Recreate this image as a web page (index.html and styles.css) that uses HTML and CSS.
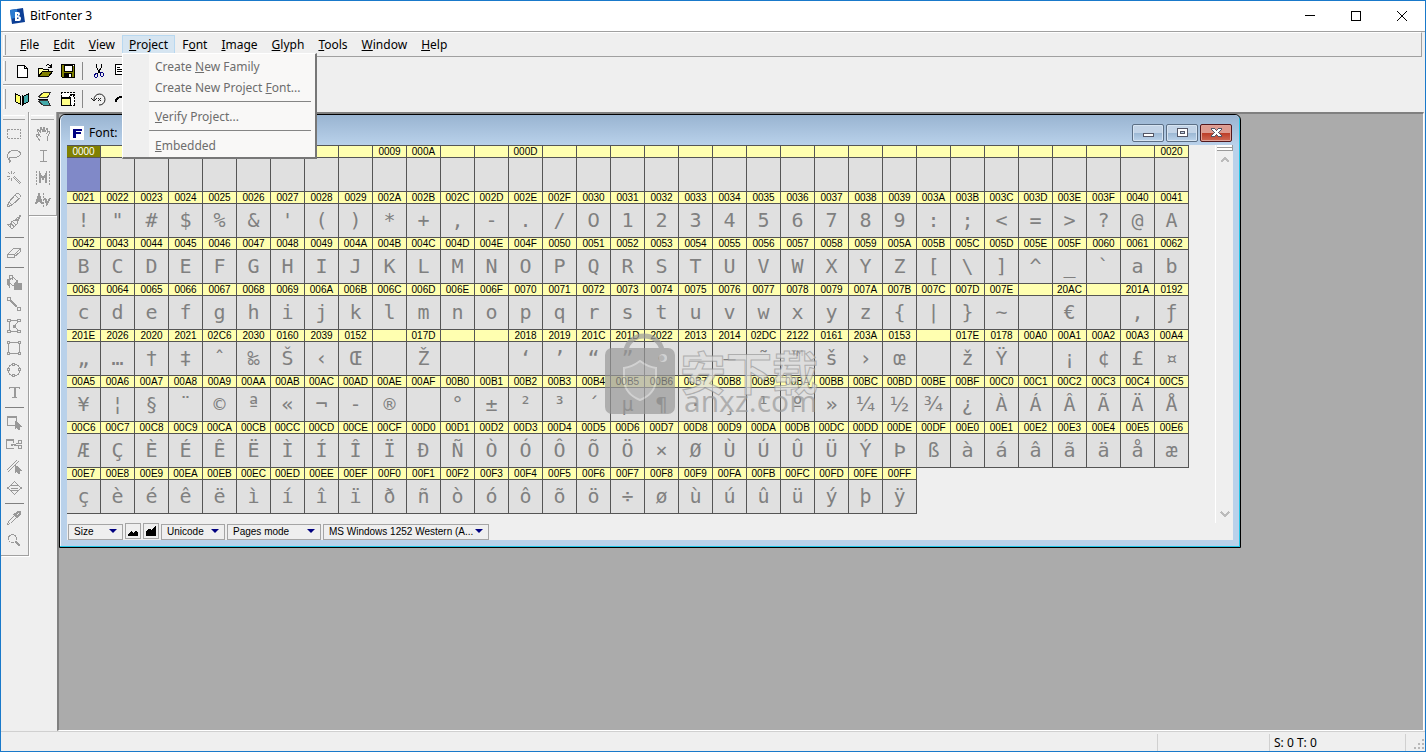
FILE: index.html
```html
<!DOCTYPE html>
<html lang="en">
<head>
<meta charset="utf-8">
<title>BitFonter 3</title>
<link rel="stylesheet" href="styles.css">
</head>
<body>
<div class="app">
  <header class="titlebar">
    <svg class="app-icon" viewBox="0 0 16 16"><path d="M1 2 14 0 16 14 3 16z" fill="#0c3f96"/><path d="M1 2 8 1 9 9 2 11z" fill="#2b7bd0"/><path d="M6 4h3q2 0 2 2t-2 2q3 0 3 2.500t-2 2.500H6zM8 6v1.500h1V6zm0 3.500V11h1.500V9.500z" fill="#fff" fill-rule="evenodd"/></svg>
    <h1 class="app-title">BitFonter 3</h1>
    <div class="caption-buttons">
      <button class="caption-button" aria-label="Minimize"><svg viewBox="0 0 12 12"><path d="M1 5.500h10"/></svg></button>
      <button class="caption-button" aria-label="Maximize"><svg viewBox="0 0 12 12"><path d="M1.500 1.500h9v9h-9z"/></svg></button>
      <button class="caption-button" aria-label="Close"><svg viewBox="0 0 12 12"><path d="M1 1l10 10M11 1L1 11" shape-rendering="auto"/></svg></button>
    </div>
  </header>

  <nav class="menubar">
    <span class="grip grip--menu"></span>
    <button class="menu-item"><u>F</u>ile</button>
    <button class="menu-item"><u>E</u>dit</button>
    <button class="menu-item"><u>V</u>iew</button>
    <div class="menu-holder">
      <button class="menu-item menu-item--open"><u>P</u>roject</button>
      <div class="dropdown">
        <button class="dropdown-item" disabled>Create <u>N</u>ew Family</button>
        <button class="dropdown-item" disabled>Create New Project <u>F</u>ont...</button>
        <hr class="dropdown-rule">
        <button class="dropdown-item" disabled><u>V</u>erify Project...</button>
        <hr class="dropdown-rule">
        <button class="dropdown-item" disabled><u>E</u>mbedded</button>
      </div>
    </div>
    <button class="menu-item">F<u>o</u>nt</button>
    <button class="menu-item"><u>I</u>mage</button>
    <button class="menu-item"><u>G</u>lyph</button>
    <button class="menu-item"><u>T</u>ools</button>
    <button class="menu-item"><u>W</u>indow</button>
    <button class="menu-item"><u>H</u>elp</button>
  </nav>

  <div class="toolbars">
    <div class="toolbar">
      <span class="grip"></span>
      <button class="tool" aria-label="New"><svg viewBox="0 0 16 16"><path d="M3.500 2.500h7l3 3v9h-10z" fill="#fff" stroke="#000"/><path d="M10.500 2.500v3h3" fill="none" stroke="#000"/></svg></button>
      <button class="tool" aria-label="Open"><svg viewBox="0 0 16 16"><path d="M1 5h4l1 1h5v3H5l-3 4H1z" fill="#ffffa0" stroke="#000"/><path d="M5.500 8.500h10l-4 5h-10z" fill="#808000" stroke="#000"/><path d="M9 3q3-3 5 1M14 1v3h-3" fill="none" stroke="#000"/></svg></button>
      <button class="tool" aria-label="Save"><svg viewBox="0 0 16 16"><path d="M1.500 1.500h13v13h-12l-1-1z" fill="#808000" stroke="#000"/><path d="M4 2h8v6H4z" fill="#fff" stroke="#000"/><path d="M4 10h8v4H4z" fill="#000"/><path d="M9 11h2v3H9zM13 2h1v1h-1z" fill="#fff"/></svg></button>
      <span class="tool-rule"></span>
      <button class="tool" aria-label="Cut"><svg viewBox="0 0 16 16"><path d="M5.500 1v3l4 7M10.500 1v3l-4 7" fill="none" stroke="#000"/><path d="M3.500 11.500l2-1 1 1v2l-1 1h-1l-1-1zM9.500 9.500h2l1 1v2l-1 1h-1l-1-1z" fill="none" stroke="#000080"/></svg></button>
      <button class="tool" aria-label="Copy"><svg viewBox="0 0 16 16"><path d="M1.500 1.500h6l3 3v7h-9zM3 4h3M3 6h5M3 8h5" fill="#fff" stroke="#000"/></svg></button>
    </div>
    <div class="toolbar">
      <span class="grip"></span>
      <button class="tool" aria-label="Flip horizontally"><svg viewBox="0 0 16 16"><path d="M1.500 2.500l5 3v8l-5-3z" fill="#ff6" stroke="#000"/><path d="M14.500 2.500l-5 3v8l5-3z" fill="#4aa" stroke="#000"/><path d="M8 4v11" stroke="#000"/></svg></button>
      <button class="tool" aria-label="Flip vertically"><svg viewBox="0 0 16 16"><path d="M6.500 1.500h7l-3 5h-7l-2-1z" fill="#ff6" stroke="#333"/><path d="M3.500 9.500h7l3 5h-7l-5-4z" fill="#4aa" stroke="#333"/><path d="M1 8h10" stroke="#000"/></svg></button>
      <button class="tool" aria-label="Resize"><svg viewBox="0 0 16 16"><path d="M1.500 5.500v-4h13v13h-4" fill="#fff" stroke="#000" stroke-dasharray="2 1"/><path d="M1.500 6.500h9v8h-9z" fill="#ff8" stroke="#000"/><path d="M1 7h10" stroke="#000" stroke-width="2"/><path d="M9 6l4-3M10 3h3v3" fill="none" stroke="#000"/></svg></button>
      <span class="tool-rule"></span>
      <button class="tool" aria-label="Rotate left"><svg viewBox="0 0 16 16"><path d="M3 9a5.500 5.500 0 1 1 5 5M0 7l3 3 3-3M7 7l3 3M10 7l-3 3" fill="none" stroke="#222" shape-rendering="auto"/></svg></button>
      <button class="tool" aria-label="Rotate right"><svg viewBox="0 0 16 16"><path d="M2 11q0-5 6-5" fill="none" stroke="#000" stroke-width="2"/></svg></button>
    </div>
  </div>

  <main class="workspace">
    <aside class="palette palette--draw">
      <button class="tool" aria-label="Select"><svg viewBox="0 0 16 16"><path d="M1.500 3.500h13v9h-13z" stroke-dasharray="2 1"/></svg></button>
      <button class="tool" aria-label="Lasso"><svg viewBox="0 0 16 16"><path d="M4 11C-1 10 1 3 8 2.500s9 5 3 6.500c-4 1-6-1-8 1s2 2 2 3-2 0-2 2"/></svg></button>
      <button class="tool" aria-label="Magic wand"><svg viewBox="0 0 16 16"><path d="M7 7l7 7M8 6l7 7M5.500 1v3M5.500 8v3M1 6h3M2 2l2 2M9 2L7 4M2 10l2-2"/></svg></button>
      <button class="tool" aria-label="Pencil"><svg viewBox="0 0 16 16"><path d="M1.500 14.500l1-4 8-9q1-1 3 1t1 3l-9 8zM3 10l3 3M9 3l4 4"/></svg></button>
      <button class="tool" aria-label="Brush"><svg viewBox="0 0 16 16"><path d="M14 1l1 1-4 5 1 2-6 6-5-5 3 1 0-2 2 1-1-2 4-2 2 1zM6 7l4 4M5 9l3 4M3 12l2 1M12 3l-3 4M13 5l-2 3"/></svg></button>
      <hr class="palette-rule">
      <button class="tool" aria-label="Eraser"><svg viewBox="0 0 16 16"><path d="M1.500 10.500l6-6h7l-6 6zM1.500 10.500v3h6l7-6v-3M8.500 10.500v3"/></svg></button>
      <hr class="palette-rule">
      <button class="tool" aria-label="Fill"><svg viewBox="0 0 16 16"><path d="M2 7l5-4 4 4-4 5zM3.500 5V1.500h3V6"/><path d="M1 6l2-1v7l-2-3zM9 9l2-2v2h4v6H8v-3z" fill="#999"/></svg></button>
      <button class="tool" aria-label="Line"><svg viewBox="0 0 16 16"><path d="M1.500 1.500h3v3h-3zM11.500 11.500h3v3h-3z"/><path d="M5 5l6 6" stroke-width="2"/></svg></button>
      <button class="tool" aria-label="Polygon"><svg viewBox="0 0 16 16"><path d="M3.500 4v8M4 13.500h8M4 2.500h8M12 4L8 8l4 4M1.500 1.500h3v2h-3zM11.500 1.500h3v2h-3zM1.500 12.500h3v2h-3zM11.500 12.500h3v2h-3zM7 7h2v2H7z"/></svg></button>
      <button class="tool" aria-label="Rectangle"><svg viewBox="0 0 16 16"><path d="M2.500 4v8M13.500 4v8M4 13.500h8M4 2.500h8M1.500 1.500h2v2h-2zM12.500 1.500h2v2h-2zM1.500 12.500h2v2h-2zM12.500 12.500h2v2h-2z"/></svg></button>
      <button class="tool" aria-label="Ellipse"><svg viewBox="0 0 16 16"><circle cx="8" cy="8" r="6"/><path fill="#efefef" d="M6.500 1.500h2v2h-2zM6.500 12.500h2v2h-2zM1.500 6.500h2v2h-2zM12.500 6.500h2v2h-2z"/></svg></button>
      <button class="tool" aria-label="Text"><svg viewBox="0 0 16 16"><path d="M3.500 5V3.500h10V5M6 13.500h5"/><path d="M8.500 3v11" stroke-width="2"/></svg></button>
      <hr class="palette-rule">
      <button class="tool" aria-label="Pick object"><svg viewBox="0 0 16 16"><path d="M1.500 2.500h9v9h-9zM1 3.500h10"/><path d="M9 7v8l2-2 2 3 1-1-1-3h2z" fill="#999"/></svg></button>
      <button class="tool" aria-label="Cut object"><svg viewBox="0 0 16 16"><path d="M8 12.500H.500v-9h7V7M0 4.500h8M5 8l7 2M5 10l7-3M12 4.500h3v3h-3zM12 9.500h3v3h-3z"/></svg></button>
      <button class="tool" aria-label="Pick line"><svg viewBox="0 0 16 16"><path d="M1 12L11 2M2 14L13 3"/><path d="M9 7v8l2-2 2 3 1-1-1-3h2z" fill="#999"/></svg></button>
      <button class="tool" aria-label="Move"><svg viewBox="0 0 16 16"><path d="M4.500 5.500l4-4 4 4zM4.500 10.500l4 4 4-4zM5 8h7M4 6L1.500 8 4 10M13 6l2.500 2L13 10"/></svg></button>
      <hr class="palette-rule">
      <button class="tool" aria-label="Eyedropper"><svg viewBox="0 0 16 16"><path d="M1.500 14.500l1-3 6-6 2 2-6 6z"/><path d="M8 4l4 4M9 5l3-3 2 0 0 2-3 3z" stroke-width="2"/></svg></button>
      <button class="tool" aria-label="Zoom"><svg viewBox="0 0 16 16"><circle cx="6.500" cy="6.500" r="4"/><path d="M10 10l4 4" stroke-width="2"/></svg></button>
    </aside>
    <aside class="palette">
      <button class="tool" aria-label="Hand"><svg viewBox="0 0 16 16"><path d="M5 15l-4-6 1-1 3 2L2 4l1-1 3 4-1-5 1-1 2 5V1h1l1 5 2-4 1 1-1 4 2-2 1 1-3 6v3"/></svg></button>
      <button class="tool" aria-label="Text cursor"><svg viewBox="0 0 16 16"><path d="M5 2.500h7M5 13.500h7M8.500 3v10"/></svg></button>
      <button class="tool" aria-label="Metrics"><svg viewBox="0 0 16 16"><path d="M1.500 1v14M14.500 1v14" stroke-dasharray="2 1"/><path d="M5 13V4l3 5 3-5v9" stroke-width="2"/></svg></button>
      <button class="tool" aria-label="Kerning"><svg viewBox="0 0 16 16"><path d="M1 12L4 3l3 9M2 9h4M10 6l2 6 3-6" stroke-width="2"/><path d="M8.500 1v14" stroke-dasharray="2 1"/></svg></button>
    </aside>

    <section class="desktop">
      <article class="font-window">
        <header class="font-title">
          <svg class="font-icon" viewBox="0 0 14 14"><path d="M0 0h14v14H0z" fill="#fff"/><path d="M3 3h9v2H6v1h5v2H6v4H3z" fill="#000080"/></svg>
          <h2 class="font-name">Font:</h2>
          <div class="window-buttons">
            <button class="window-button" aria-label="Minimize font window"><svg viewBox="0 0 14 14"><path d="M2.500 7.500h10v3h-10z"/></svg></button>
            <button class="window-button" aria-label="Maximize font window"><svg viewBox="0 0 14 14"><path d="M2.500 2.500h10v8h-10zM5.500 5.500h4v2h-4z" fill-rule="evenodd"/></svg></button>
            <button class="window-button window-button--close" aria-label="Close font window"><svg viewBox="0 0 14 14"><path d="M2.500 2.500h3l2 2 2-2h3v1l-3 3 3 3v1h-3l-2-2-2 2h-3v-1l3-3-3-3z"/></svg></button>
          </div>
        </header>
        <div class="font-client">
          <div class="chart-area">
            <table class="chart"><tbody id="chart"></tbody></table>
            <div class="scroller">
              <span class="splitter"></span>
              <svg class="scroll-arrow" viewBox="0 0 10 8"><path d="M1 6l4-4 4 4"/></svg>
              <svg class="scroll-arrow scroll-arrow--down" viewBox="0 0 10 8"><path d="M1 2l4 4 4-4"/></svg>
            </div>
          </div>
          <footer class="chart-bar">
            <span class="picker picker--size"><select aria-label="Size"><option>Size</option></select></span>
            <button class="zoom-button" aria-label="Smaller"><svg viewBox="0 0 12 12"><path d="M1 11V9l3-3 2 2 3-3 2 3v3z"/></svg></button>
            <button class="zoom-button" aria-label="Larger"><svg viewBox="0 0 12 12"><path d="M1 11V6l2-2h2l1 1 3-3 2-1v10z"/></svg></button>
            <span class="picker picker--code"><select aria-label="Encoding type"><option>Unicode</option></select></span>
            <span class="picker picker--mode"><select aria-label="Mode"><option>Pages mode</option></select></span>
            <span class="picker picker--page"><select aria-label="Code page"><option>MS Windows 1252 Western (A...</option></select></span>
          </footer>
          <svg class="watermark" viewBox="0 0 216 96">
            <path d="M22 18C24-2 56-2 58 18" fill="none" stroke="#999" stroke-width="5"/>
            <rect x="1" y="15" width="70" height="66" rx="7" fill="#999"/>
            <path d="M36 28q8 6 16 7v12q-1 14-16 20-15-6-16-20V35q8-1 16-7z" fill="#aaa" stroke="#ccc" stroke-width="2"/>
            <circle cx="59" cy="25" r="4" fill="#ccc"/>
            <text class="mark-name" x="76" y="57">安下载</text>
            <text class="mark-site" x="80" y="79">anxz.com</text>
          </svg>
        </div>
      </article>
    </section>
  </main>

  <footer class="statusbar">
    <span class="status-cell status-cell--wide"></span>
    <span class="status-cell status-cell--mid"></span>
    <span class="status-cell status-cell--count">S: 0 T: 0</span>
    <span class="size-grip"><svg viewBox="0 0 10 10"><path d="M8 0h2v2H8zM4 4h2v2H4zM8 4h2v2H8zM0 8h2v2H0zM4 8h2v2H4zM8 8h2v2H8z"/></svg></span>
  </footer>
</div>
<script src="script.js"></script>
</body>
</html>
```
FILE: styles.css
```css
* { box-sizing: border-box; }

body {
  margin: 0;
  font: 12px/16px "Noto Sans", "Open Sans", sans-serif;
  color: #000;
}

button {
  margin: 0;
  padding: 0;
  border: 0;
  background: none;
  font: inherit;
  color: inherit;
}

svg { display: block; shape-rendering: crispEdges; }

.app {
  display: flex;
  flex-direction: column;
  min-height: 100vh;
  background: #efefef;
  border: 1px solid #1979ca;
}

/* Main caption */
.titlebar {
  display: flex;
  align-items: center;
  height: 31px;
  padding-left: 8px;
  background: #fff;
  border-bottom: 1px solid #a0a0a0;
}
.app-icon { width: 16px; height: 16px; margin-right: 5px; shape-rendering: auto; }
.app-title { margin: 0; font-size: 12px; font-weight: 400; }
.caption-buttons { display: flex; margin-left: auto; }
.caption-button {
  display: grid;
  place-items: center;
  width: 46px;
  height: 30px;
}
.caption-button svg { width: 12px; height: 12px; fill: none; stroke: #000; }

/* Menu */
.menubar {
  display: flex;
  align-items: center;
  height: 25px;
  margin: 0 3px 0 2px;
  border-top: 1px solid #fff;
  border-right: 1px solid #a0a0a0;
  border-bottom: 1px solid #a0a0a0;
}
.grip {
  width: 3px;
  height: 20px;
  margin-right: 4px;
  border-left: 1px solid #fff;
  border-right: 1px solid #a0a0a0;
}
.grip--menu { margin-right: 7px; }
.menu-item {
  height: 19px;
  padding: 0 6px;
  border: 1px solid transparent;
  line-height: 16px;
}
.menu-item--open { background: #d6e5f1; border-color: #b8d8f0; }
.menu-holder { position: relative; }
.dropdown {
  position: absolute;
  z-index: 10;
  top: 18px;
  left: 0;
  display: flex;
  flex-direction: column;
  width: 195px;
  padding: 2px 4px 1px 26px;
  background: linear-gradient(90deg, #efefef 26px, #f9f8f7 26px);
  border: 1px solid #fff;
  border-right: 2px solid #777;
  border-bottom: 2px solid #777;
}
.dropdown-item {
  height: 21px;
  padding-left: 6px;
  text-align: left;
  color: #6d6d6d;
  white-space: nowrap;
}
.dropdown-rule {
  width: 100%;
  margin: 3px 0 4px;
  border: 0;
  border-top: 1px solid #858585;
}

/* Tool rows */
.toolbars { width: 280px; padding-left: 2px; }
.toolbar {
  display: flex;
  align-items: center;
  height: 28px;
  border-top: 1px solid #fff;
  border-bottom: 1px solid #a0a0a0;
}
.toolbar:last-child { height: 27px; border-bottom: 0; }
.tool {
  display: grid;
  place-items: center;
  width: 23px;
  height: 22px;
}
.tool svg { width: 16px; height: 16px; }
.tool-rule {
  width: 1px;
  height: 18px;
  margin: 0 4px 0 3px;
  background: #888;
}

/* Work area */
.workspace { display: flex; flex: 1; }
.palette {
  align-self: flex-start;
  display: flex;
  flex-direction: column;
  align-items: center;
  width: 28px;
  padding: 3px 0 4px;
  border: solid #a0a0a0;
  border-width: 0 1px 1px 0;
  box-shadow: 1px 1px #fff;
}
.palette::before {
  content: "";
  align-self: stretch;
  height: 3px;
  margin: 0 2px 3px;
  border-top: 1px solid #fff;
  border-bottom: 1px solid #a0a0a0;
}
.palette .tool svg { fill: none; stroke: #999; }
.palette-rule {
  width: 19px;
  margin: 4px 0 3px;
  border: 0;
  border-top: 1px solid #808080;
}
.palette--draw { padding-right: 1px; }
.desktop {
  position: relative;
  flex: 1;
  margin-right: 1px;
  background: #ababab;
  border: solid #808080;
  border-width: 2px 1px 1px 2px;
  border-right-color: #fff;
  border-bottom-color: #fff;
}

/* Font document window */
.font-window {
  position: absolute;
  top: 0;
  left: 0;
  padding: 0 7px 7px;
  background: #b9d1ea;
  border: 1px solid #000;
  border-radius: 6px 6px 0 0;
  box-shadow: inset -1px -1px #21c5e6, inset 1px 1px #eef5fc;
}
.font-title {
  display: flex;
  align-items: center;
  height: 30px;
  margin: 0 -6px;
  padding: 5px 7px 0 9px;
  background: linear-gradient(#99b4d1, #b9d1ea);
  border-radius: 5px 5px 0 0;
}
.font-icon { width: 14px; height: 14px; margin-right: 5px; }
.font-name { margin: 0; font-size: 12px; font-weight: 400; }
.window-buttons { display: flex; gap: 2px; margin-left: auto; }
.window-button {
  display: grid;
  place-items: center;
  width: 32px;
  height: 18px;
  border: 1px solid #5c6f85;
  border-radius: 2px;
  background: linear-gradient(#c3d4e7 48%, #9bb7d3 50%, #bcd3eb);
  box-shadow: inset 0 0 0 1px #d6e4f2;
}
.window-button--close {
  border-color: #52181d;
  background: linear-gradient(#dd9b90 48%, #bc3c27 50%, #cf6a55);
  box-shadow: inset 0 0 0 1px #e0a297;
}
.window-button svg { width: 14px; height: 14px; fill: #fff; stroke: #535666; }
.font-client {
  position: relative;
  width: 1166px;
  background: #efefef;
}
.chart-area { display: flex; justify-content: space-between; }
.chart {
  align-self: flex-start;
  border-spacing: 0;
  border-top: 1px solid #555;
}
.chart td { padding: 0; border: solid #555; border-width: 0 1px 1px 0; }
.code {
  height: 12px;
  width: 33px;
  background: #ffffb0;
  border-bottom: 1px solid #555;
  font: 10px/12px "Liberation Sans", Arial, sans-serif;
  text-align: center;
}
.glyph {
  height: 33px;
  background: #e0e0e0;
  color: #808080;
  font: 20px/32px "DejaVu Sans Mono", monospace;
  text-align: center;
}
.glyph--plain { font-family: "DejaVu Sans", sans-serif; }
.selected .code { background: #808000; color: #fff; }
.selected .glyph { background: #8089c8; }

.scroller {
  display: flex;
  flex-direction: column;
  align-items: center;
  width: 18px;
  height: 378px;
  padding-bottom: 5px;
  border-left: 1px solid #fff;
}
.splitter {
  width: 16px;
  height: 6px;
  margin-bottom: 5px;
  border: solid #999;
  border-width: 0 1px 1px 0;
  background: linear-gradient(#fff 2px, #999 2px, #999 3px, #fff 3px);
}
.scroll-arrow { width: 10px; height: 8px; fill: none; stroke: #bbb; stroke-width: 2; }
.scroll-arrow--down { margin-top: auto; }

.chart-bar { display: flex; gap: 2px; height: 17px; padding: 0 1px 1px; }
.picker { position: relative; height: 16px; }
.picker::after {
  content: "";
  position: absolute;
  top: 6px;
  right: 6px;
  border: 4px solid transparent;
  border-top: 4px solid #000080;
  border-bottom: 0;
  pointer-events: none;
}
.picker select {
  appearance: none;
  width: 100%;
  height: 16px;
  margin: 0;
  padding: 0 0 0 5px;
  border: 1px solid #a5a5a5;
  border-radius: 0;
  background: #efefef;
  color: #000;
  font: 10px/14px "Liberation Sans", Arial, sans-serif;
}
.picker--size { width: 55px; }
.picker--code { width: 64px; }
.picker--mode { width: 94px; }
.picker--page { width: 166px; }
.zoom-button {
  display: grid;
  place-items: center;
  width: 16px;
  height: 16px;
  border: 1px solid #a5a5a5;
}
.zoom-button svg { width: 12px; height: 12px; }

.watermark {
  position: absolute;
  top: 188px;
  left: 537px;
  width: 216px;
  height: 96px;
  opacity: 0.7;
  overflow: visible;
  pointer-events: none;
  shape-rendering: auto;
}
.mark-name {
  font: 700 46px "Noto Sans CJK SC", sans-serif;
  fill: #ddd;
  stroke: #999;
  stroke-width: 1px;
}
.mark-site { font: 30px "Open Sans", sans-serif; fill: #999; }

/* Status line */
.statusbar {
  display: flex;
  align-items: stretch;
  height: 20px;
  padding-top: 2px;
  border-top: 1px solid #d0d0d0;
}
.status-cell { border-right: 1px solid #d0d0d0; line-height: 17px; }
.status-cell--wide { flex: 1; }
.status-cell--mid { width: 112px; }
.status-cell--count { width: 136px; padding-left: 4px; }
.size-grip { display: flex; align-items: flex-end; justify-content: flex-end; width: 19px; padding: 0 1px 2px 0; }
.size-grip svg { width: 10px; height: 10px; fill: #b8b8b8; }
```
FILE: script.js
```
const range = (from, to) =>
  Array.from({ length: to - from + 1 }, (_, i) => from + i);

// Windows-1252 order; null marks a cell without a code.
const control = range(0x00, 0x20).map((c) =>
  [0x00, 0x09, 0x0a, 0x0d, 0x20].includes(c) ? c : null);

const codes = [
  ...control,
  ...range(0x21, 0x7e),
  null, 0x20ac, null, 0x201a, 0x0192, 0x201e, 0x2026, 0x2020, 0x2021,
  0x02c6, 0x2030, 0x0160, 0x2039, 0x0152, null, 0x017d, null, null,
  0x2018, 0x2019, 0x201c, 0x201d, 0x2022, 0x2013, 0x2014, 0x02dc,
  0x2122, 0x0161, 0x203a, 0x0153, null, 0x017e, 0x0178,
  ...range(0xa0, 0xff),
];

const COLUMNS = 33;
const BLANK = [0xa0, 0xaf];
// Undotted zero and diagonal fractions come from the proportional face.
const PLAIN = [0x30, 0xbc, 0xbd, 0xbe];
const body = document.getElementById("chart");

let row;
codes.forEach((code, i) => {
  if (i % COLUMNS === 0) row = body.insertRow();
  const cell = row.insertCell();
  if (i === 0) cell.className = "selected";

  const label = document.createElement("div");
  label.className = "code";
  label.textContent =
    code === null ? "" : code.toString(16).toUpperCase().padStart(4, "0");

  const glyph = document.createElement("div");
  glyph.className = PLAIN.includes(code) ? "glyph glyph--plain" : "glyph";
  if (code > 0x20 && !BLANK.includes(code)) {
    glyph.textContent = code === 0xad ? "-" : String.fromCodePoint(code);
  }

  cell.append(label, glyph);
});
```
